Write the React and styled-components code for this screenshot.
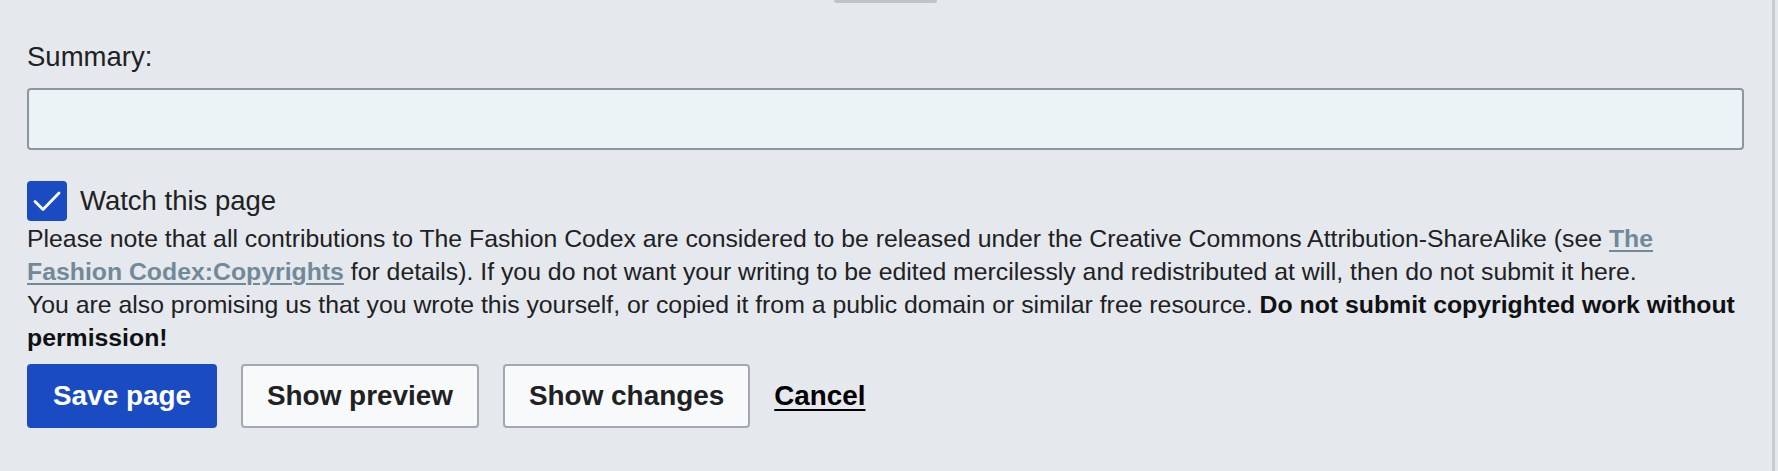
import React from "react";
import styled, { createGlobalStyle } from "styled-components";

const Global = createGlobalStyle`
  html, body { margin: 0; padding: 0; }
  body {
    background: #e5e8ed;
    font-family: "Liberation Sans", Arial, Helvetica, sans-serif;
    color: #202122;
  }
`;

const Page = styled.div`
  position: relative;
  width: 1778px;
  height: 471px;
  box-sizing: border-box;
  padding: 38px 34px 0 27px;
  display: flex;
  flex-direction: column;
  overflow: hidden;
`;

const RightRule = styled.div`
  position: absolute;
  top: 0;
  bottom: 0;
  right: 3px;
  width: 3px;
  background: #c8ccd1;
`;

const ResizeHandle = styled.div`
  position: absolute;
  top: 0;
  left: 834px;
  width: 103px;
  height: 3px;
  background: #c0c3c8;
  border-radius: 0 0 3px 3px;
`;

const Label = styled.label`
  font-size: 27.5px;
  line-height: 38px;
  display: block;
`;

const SummaryInput = styled.input`
  margin-top: 12px;
  box-sizing: border-box;
  width: 1717px;
  height: 62px;
  border: 2px solid #8f959c;
  border-radius: 4px;
  background: #ecf3f7;
  font: inherit;
  font-size: 27px;
  padding: 0 14px;
  outline: none;
`;

const CheckRow = styled.div`
  margin-top: 31px;
  display: flex;
  align-items: center;
  gap: 13px;
  height: 40px;
`;

const CheckBox = styled.span`
  width: 40px;
  height: 40px;
  box-sizing: border-box;
  border-radius: 4px;
  background: #1a4bc2;
  display: flex;
  flex: none;
`;

const CheckText = styled.span`
  font-size: 27.5px;
  line-height: 40px;
`;

const Notice = styled.div`
  font-size: 24.8px;
  line-height: 33px;
  margin-top: 1px;
`;

const NoticeLine = styled.p`
  margin: 0;
`;

const Link = styled.a`
  color: #72899a;
  font-weight: bold;
  text-decoration: underline;
  text-underline-offset: 3px;
  text-decoration-thickness: 2px;
`;

const Strong = styled.b`
  font-weight: bold;
  color: #101112;
`;

const Actions = styled.div`
  margin-top: 10px;
  display: flex;
  align-items: center;
  gap: 24px;
`;

const Button = styled.button`
  box-sizing: border-box;
  height: 64px;
  padding: 0 24px;
  border-radius: 4px;
  font-family: inherit;
  font-size: 27.9px;
  font-weight: bold;
  border: 2px solid ${(p) => (p.$primary ? "#1a4bc2" : "#a2a9b1")};
  background: ${(p) => (p.$primary ? "#1a4bc2" : "#f8f9fa")};
  color: ${(p) => (p.$primary ? "#ffffff" : "#202122")};
  cursor: pointer;
`;

const CancelLink = styled.a`
  font-size: 27.8px;
  font-weight: bold;
  color: #000;
  text-decoration: underline;
  text-underline-offset: 4px;
  text-decoration-thickness: 2px;
`;

export default function App() {
  return (
    <>
      <Global />
      <Page>
        <ResizeHandle />
        <RightRule />
        <Label htmlFor="summary">Summary:</Label>
        <SummaryInput id="summary" type="text" />
        <CheckRow>
          <CheckBox>
            <svg width="40" height="40" viewBox="0 0 40 40" fill="none">
              <path d="M8 20.5 L16 28.5 L32 12" stroke="#fff" strokeWidth="2.8" strokeLinecap="round" strokeLinejoin="round" />
            </svg>
          </CheckBox>
          <CheckText>Watch this page</CheckText>
        </CheckRow>
        <Notice>
          <NoticeLine>
            Please note that all contributions to The Fashion Codex are considered to be released under the Creative Commons Attribution-ShareAlike (see{" "}
            <Link href="#">The Fashion Codex:Copyrights</Link> for details). If you do not want your writing to be edited mercilessly and redistributed at will, then do not submit it here.
          </NoticeLine>
          <NoticeLine>
            You are also promising us that you wrote this yourself, or copied it from a public domain or similar free resource.{" "}
            <Strong>Do not submit copyrighted work without permission!</Strong>
          </NoticeLine>
        </Notice>
        <Actions>
          <Button $primary>Save page</Button>
          <Button>Show preview</Button>
          <Button>Show changes</Button>
          <CancelLink href="#">Cancel</CancelLink>
        </Actions>
      </Page>
    </>
  );
}
